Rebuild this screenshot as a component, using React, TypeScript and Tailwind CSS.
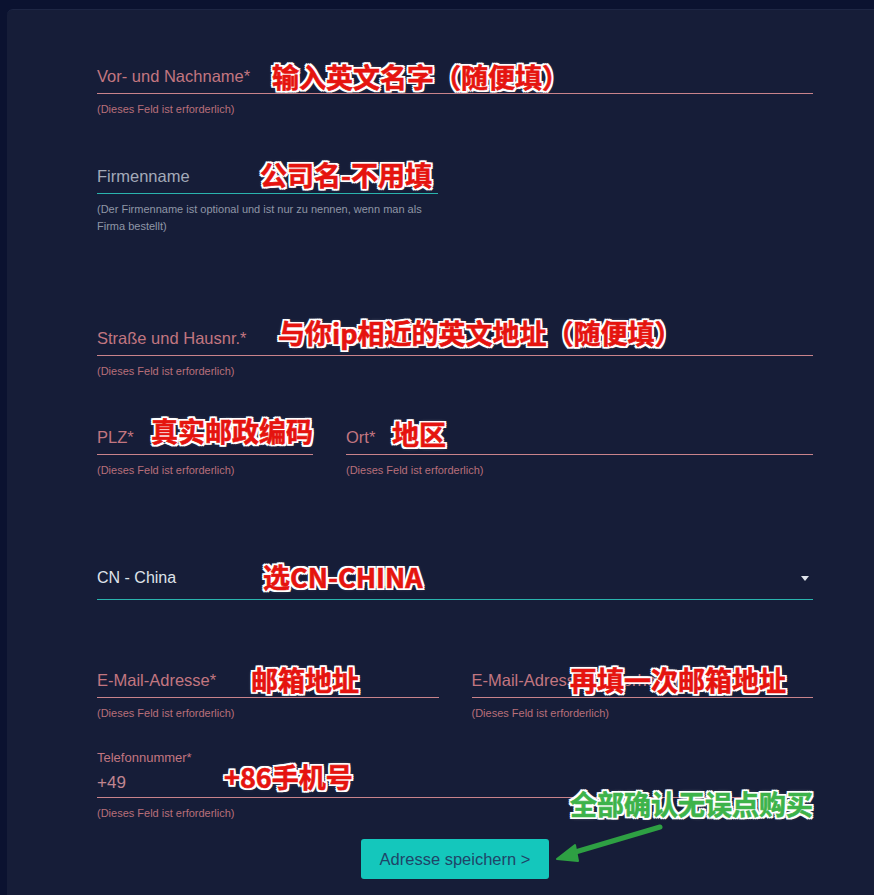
import type { ReactNode } from 'react';

const uiFont = "font-['Liberation_Sans',Arial,sans-serif]";

function Field({
  label,
  helper,
  optional = false,
  className = '',
}: {
  label: string;
  helper: ReactNode;
  optional?: boolean;
  className?: string;
}) {
  return (
    <div className={className}>
      <div
        className={
          optional
            ? 'h-[31px] flex items-end pb-[7px] border-b border-[#2ab3ad]'
            : 'h-[31px] flex items-end pb-[7px] border-b border-[#c9838b]'
        }
      >
        <span
          className={
            optional
              ? 'text-[16.5px] leading-[20px] text-[#a4aab8] whitespace-nowrap'
              : 'text-[16.5px] leading-[20px] text-[#c27680] whitespace-nowrap'
          }
        >
          {label}
        </span>
      </div>
      <p
        className={
          optional
            ? 'mt-[7px] text-[11px] leading-[17px] text-[#8f96a6]'
            : 'mt-[7px] text-[11px] leading-[16px] text-[#b86f7a]'
        }
      >
        {helper}
      </p>
    </div>
  );
}

const required = '(Dieses Feld ist erforderlich)';

function Note({
  children,
  className,
  green = false,
}: {
  children: ReactNode;
  className: string;
  green?: boolean;
}) {
  return (
    <span
      className={`absolute whitespace-nowrap font-['Noto_Sans_CJK_SC',sans-serif] font-bold text-[27px] leading-none [text-spacing-trim:space-all] [text-shadow:2px_0_#fff,-2px_0_#fff,0_2px_#fff,0_-2px_#fff,2px_2px_#fff,-2px_-2px_#fff,2px_-2px_#fff,-2px_2px_#fff,0_0_4px_rgba(255,255,255,0.6)] ${
        green
          ? 'text-[#3db34a] [-webkit-text-stroke:0.6px_#3db34a]'
          : 'text-[#e5140f] [-webkit-text-stroke:0.6px_#e5140f]'
      } ${className}`}
    >
      {children}
    </span>
  );
}

export default function App() {
  return (
    <div className={`min-h-[895px] bg-[#0b1230] pt-[9px] pl-[7px] ${uiFont}`}>
      <div className="relative min-h-[886px] bg-[#161d38] rounded-tl-md border-t border-[#1e2644] pl-[90px] pr-[61px] pt-[53px]">
        {/* Name */}
        <Field label="Vor- und Nachname*" helper={required} />

        {/* Company */}
        <Field
          className="mt-[46px] w-[341px]"
          optional
          label="Firmenname"
          helper="(Der Firmenname ist optional und ist nur zu nennen, wenn man als Firma bestellt)"
        />

        {/* Street */}
        <Field className="mt-[90px]" label="Straße und Hausnr.*" helper={required} />

        {/* Zip / city */}
        <div className="mt-[45px] grid grid-cols-[216px_1fr] gap-[33px]">
          <Field label="PLZ*" helper={required} />
          <Field label="Ort*" helper={required} />
        </div>

        {/* Country */}
        <div className="mt-[91px] h-[31px] flex items-end justify-between pb-[11px] border-b border-[#2ab3ad]">
          <span className="text-[16px] leading-[20px] text-[#dfe3ea]">CN - China</span>
          <svg width="8" height="5" viewBox="0 0 8 5" className="mr-[4px] mb-[7px]">
            <path d="M0 0h8L4 5z" fill="#dfe3ea" />
          </svg>
        </div>

        {/* Email */}
        <div className="mt-[67px] grid grid-cols-2 gap-[33px]">
          <Field label="E-Mail-Adresse*" helper={required} />
          <Field label="E-Mail-Adresse wiederholen*" helper={required} />
        </div>

        {/* Phone */}
        <div className="mt-[29px]">
          <p className="text-[13px] leading-[16px] text-[#c27680]">Telefonnummer*</p>
          <div className="mt-[1px] h-[31px] flex items-end pb-[4px] border-b border-[#c9838b]">
            <span className="text-[17px] leading-[20px] text-[#c08590]">+49</span>
          </div>
          <p className="mt-[7px] text-[11px] leading-[16px] text-[#b86f7a]">{required}</p>
        </div>

        <div className="mt-[18px] flex justify-center">
          <button className="w-[188px] h-[40px] rounded-[3px] bg-[#14c7bc] text-[16.5px] text-[#1f4568]">
            Adresse speichern &gt;
          </button>
        </div>

        {/* Annotations */}
        <Note className="left-[265px] top-[53px]">输入英文名字（随便填）</Note>
        <Note className="left-[253px] top-[151px]">公司名-不用填</Note>
        <Note className="left-[271px] top-[309px]">与你ip相近的英文地址（随便填）</Note>
        <Note className="left-[144px] top-[407px]">真实邮政编码</Note>
        <Note className="left-[385px] top-[410px]">地区</Note>
        <Note className="left-[256px] top-[553px]">选CN-CHINA</Note>
        <Note className="left-[244px] top-[656px]">邮箱地址</Note>
        <Note className="left-[563px] top-[656px]">再填一次邮箱地址</Note>
        <Note className="left-[217px] top-[753px]">+86手机号</Note>
        <Note green className="left-[563px] top-[780px]">
          全部确认无误点购买
        </Note>
        <svg
          className="absolute left-[533px] top-[806px]"
          width="140"
          height="55"
          viewBox="540 815 140 55"
        >
          <line
            x1="660"
            y1="826"
            x2="572"
            y2="852"
            stroke="#2ea043"
            strokeWidth="5"
            strokeLinecap="round"
          />
          <path
            d="M557 858 L575 844 L578 860 Z"
            fill="#2ea043"
            stroke="#2ea043"
            strokeWidth="2"
            strokeLinejoin="round"
          />
        </svg>
      </div>
    </div>
  );
}
